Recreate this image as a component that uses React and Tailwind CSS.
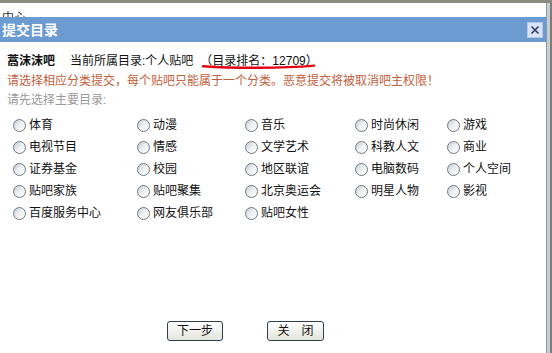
import React from "react";

const rows = [
  ["体育", "动漫", "音乐", "时尚休闲", "游戏"],
  ["电视节目", "情感", "文学艺术", "科教人文", "商业"],
  ["证券基金", "校园", "地区联谊", "电脑数码", "个人空间"],
  ["贴吧家族", "贴吧聚集", "北京奥运会", "明星人物", "影视"],
  ["百度服务中心", "网友俱乐部", "贴吧女性"],
];

function Radio({ label }) {
  return (
    <div className="flex items-center h-[22px]">
      <span className="w-[13px] h-[13px] rounded-full border border-[#6f7882] bg-gradient-to-br from-[#c9cdd3] via-[#eef0f2] to-white shrink-0" />
      <span className="ml-[3px] text-[12px] leading-[22px] text-[#111]">{label}</span>
    </div>
  );
}

export default function App() {
  return (
    <div
      className="w-[552px] h-[353px] bg-white overflow-hidden flex flex-col"
      style={{ fontFamily: "'Liberation Sans','Noto Sans CJK SC',sans-serif" }}
    >
      <div className="h-[3px] bg-[#8a8b80] shrink-0" />
      <div className="flex flex-1 min-h-0">
        <div className="flex-1 flex flex-col min-w-0">
          <div className="h-[14px] overflow-hidden shrink-0">
            <div className="mt-[9px] ml-[2px] text-[12px] leading-[12px] text-[#333]">中心</div>
          </div>
          <div className="h-[25px] bg-[#6c9bd2] flex items-center justify-between pl-[2px] pr-[3px] shrink-0">
            <span className="text-white font-bold text-[14px] leading-[14px]">提交目录</span>
            <span className="w-[16px] h-[16px] bg-[#d8e4f4] border border-[#b7c9e2] flex items-center justify-center">
              <svg width="10" height="10" viewBox="0 0 10 10">
                <path d="M1.5 1.5 L8.5 8.5 M8.5 1.5 L1.5 8.5" stroke="#2b3f66" strokeWidth="1.6" />
              </svg>
            </span>
          </div>
          <div className="pl-[7px] flex-1 flex flex-col">
            <div className="relative mt-[9px] h-[20px] leading-[20px] text-[12px] text-[#111] flex whitespace-nowrap">
              <span className="font-bold">蒿沫沫吧</span>
              <span className="ml-[15px]">当前所属目录:个人贴吧</span>
              <span className="ml-[7px]">（目录排名：12709）</span>
              <svg className="absolute left-[195px] top-[13px]" width="114" height="6" viewBox="0 0 114 6">
                <path d="M1 2.2 C30 4.2 80 4.6 112 1.6" stroke="#e00014" strokeWidth="2.4" fill="none" strokeLinecap="round" />
              </svg>
            </div>
            <div className="h-[20px] leading-[20px] text-[12px] text-[#c2603b] whitespace-nowrap">
              请选择相应分类提交，每个贴吧只能属于一个分类。恶意提交将被取消吧主权限！
            </div>
            <div className="h-[18px] leading-[18px] text-[12px] text-[#9a9a9a]">请先选择主要目录:</div>
            <div className="mt-[5px] ml-[6px] grid grid-cols-[124px_108px_110px_92px_auto]">
              {rows.map((r, i) =>
                r.map((l, j) => <Radio key={i + "-" + j} label={l} />)
              )}
            </div>
            <div className="mt-auto mb-[12px] flex gap-[44px] ml-[160px]">
              <button className="w-[56px] h-[20px] border border-[#2f3e4e] rounded-[3px] bg-gradient-to-b from-white to-[#e4e4dc] text-[12px] leading-[18px] text-[#111]">
                下一步
              </button>
              <button className="w-[57px] h-[20px] border border-[#2f3e4e] rounded-[3px] bg-gradient-to-b from-white to-[#e4e4dc] text-[12px] leading-[18px] text-[#111] whitespace-pre">
                关　闭
              </button>
            </div>
          </div>
        </div>
        <div className="w-[6px] flex shrink-0">
          <div className="w-[1px] bg-[#8d97a6]" />
          <div className="w-[3px] bg-[#c6cdd8]" />
          <div className="w-[2px] bg-[#7b7f72]" />
        </div>
      </div>
    </div>
  );
}
